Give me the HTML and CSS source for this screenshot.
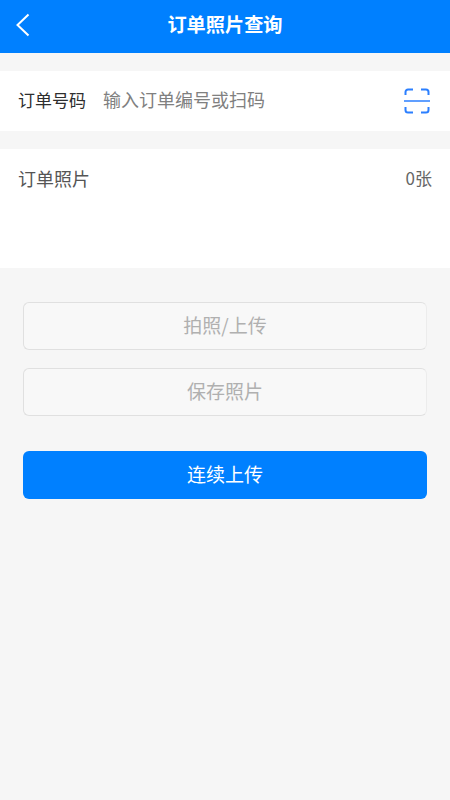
FILE: index.html
```html
<!DOCTYPE html>
<html lang="zh-CN">
<head>
<meta charset="utf-8">
<title>订单照片查询</title>
<link rel="stylesheet" href="styles.css">
</head>
<body>
<header class="nav">
  <svg class="back" width="16" height="24" viewBox="0 0 16 24"><path d="M13.500 1.500 2.500 12l11 10.500" fill="none" stroke="#fff" stroke-width="2"/></svg>
  <h1 class="title">订单照片查询</h1>
</header>
<section class="order">
  <span class="label">订单号码</span>
  <span class="placeholder">输入订单编号或扫码</span>
  <svg class="scan" width="26" height="26" viewBox="0 0 26 26" fill="none" stroke="#2b7fff" stroke-width="2">
    <path d="M1.500 7V4a2.500 2.500 0 0 1 2.500-2.500h5M17 1.500h5A2.500 2.500 0 0 1 24.500 4v3M1.500 19v3A2.500 2.500 0 0 0 4 24.500h5M17 24.500h5a2.500 2.500 0 0 0 2.500-2.500v-3"/>
    <path d="M0 13h26" stroke-width="1.500"/>
  </svg>
</section>
<section class="photos">
  <span class="photos-label">订单照片</span>
  <span class="count">0张</span>
</section>
<main class="actions">
  <div class="btn ghost first">拍照/上传</div>
  <div class="btn ghost">保存照片</div>
  <div class="btn primary">连续上传</div>
</main>
</body>
</html>
```
FILE: styles.css
```css
* { box-sizing: border-box; }
html, body { margin: 0; height: 100%; }
body {
  background: #f6f6f6;
  font-family: "Noto Sans CJK SC", "Noto Sans", sans-serif;
  color: #333;
  overflow: hidden;
}
.nav {
  height: 53px;
  background: #0080ff;
  display: flex;
  align-items: center;
  justify-content: center;
  position: relative;
  padding-bottom: 4px;
}
.back { position: absolute; left: 15px; top: 13px; }
.title { margin: 0; font-size: 19.200px; font-weight: 700; color: #fff; line-height: 1; }
.order {
  margin-top: 18px;
  height: 60px;
  background: #fff;
  display: flex;
  align-items: center;
  padding: 0 18px;
}
.label { font-size: 17px; color: #2e2e2e; width: 85px; padding-bottom: 4px; }
.placeholder { font-size: 18px; color: #808080; flex: 1; padding-bottom: 4px; }
.scan { margin-right: 2px; flex: none; }
.photos {
  margin-top: 18px;
  height: 119px;
  background: #fff;
  display: flex;
  justify-content: space-between;
  align-items: flex-start;
  padding: 16px 18px 0;
}
.photos-label { font-size: 18px; color: #555; line-height: 26px; }
.count { font-size: 17px; color: #666; line-height: 26px; }
.actions { padding: 34px 23px 0; display: flex; flex-direction: column; }
.btn {
  display: flex;
  align-items: center;
  justify-content: center;
  border-radius: 6px;
  font-size: 19px;
  padding-bottom: 4px;
}
.ghost {
  height: 48px;
  border: 1px solid #e0e0e0;
  border-right-color: #ececec;
  background: #f8f8f8;
  color: #b0b0b0;
  margin-bottom: 18px;
}
.primary { height: 48px; margin-top: 17px; background: #0080ff; color: #fff; }
```
